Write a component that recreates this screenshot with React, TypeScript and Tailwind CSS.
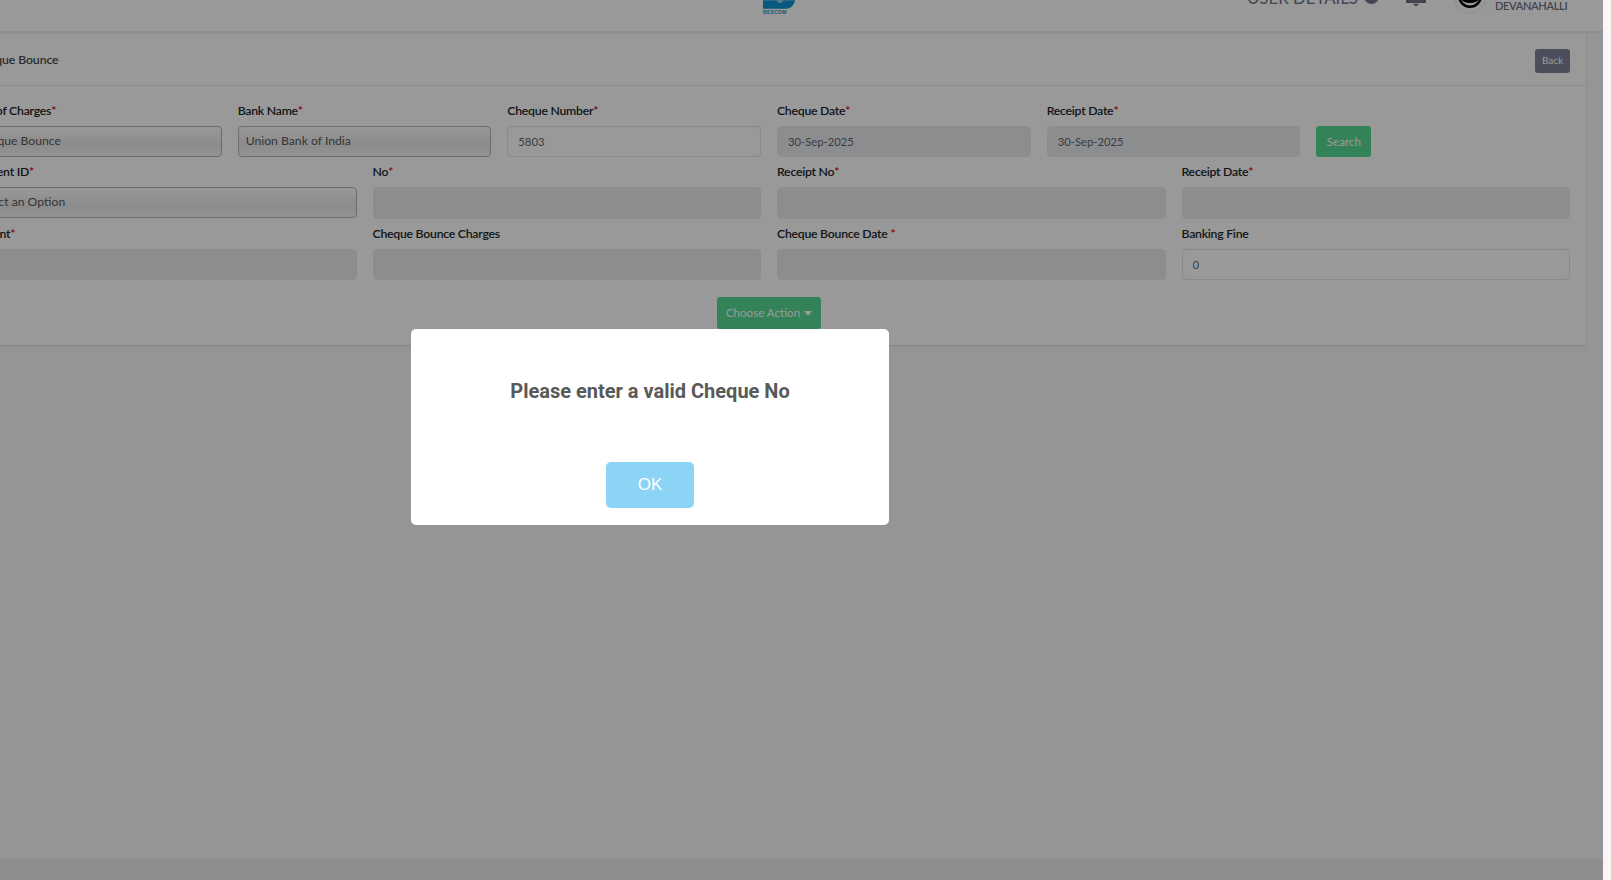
const labelCls = "h-[30px] pt-[1px] flex items-center font-['Lato',sans-serif] text-[12.25px] tracking-[-0.25px] font-semibold text-[#212529] whitespace-nowrap";
const inputCls = "w-full rounded-[4px] border px-[10px] font-['Lato',sans-serif] text-[11.25px] text-[#5f666d] outline-none";
const selectCls = "w-full h-[31px] rounded-[4px] border border-[#b4b4b4] pl-[7px] appearance-none bg-linear-to-b from-[#ffffff] via-[#e9e9e9] via-60% to-[#f6f6f6] font-['Lato',sans-serif] text-[12.2px] text-[#5a5a5a] outline-none";

function Label({ text, required = true }: { text: string; required?: boolean }) {
    return (
        <label className={labelCls}>
            {text}
            {required && <span className="text-[#e00000]">*</span>}
        </label>
    );
}

function TextField({ label, value = "", disabled = false, required = true, height = "h-[31px]" }: { label: string; value?: string; disabled?: boolean; required?: boolean; height?: string }) {
    return (
        <div className="px-2">
            <Label text={label} required={required} />
            <input
                readOnly
                defaultValue={value}
                className={`${inputCls} ${height} ${disabled ? "bg-[#e9ecef] border-[#e9ecef]" : "bg-white border-[#e4e4e4]"}`}
            />
        </div>
    );
}

function SelectField({ label, option }: { label: string; option: string }) {
    return (
        <div className="px-2">
            <Label text={label} />
            <select defaultValue={option} className={selectCls}>
                <option>{option}</option>
            </select>
        </div>
    );
}

function Header() {
    return (
        <header className="h-[31px] shrink-0 flex items-start overflow-hidden bg-white">
            {/* logo sits mostly above the fold */}
            <div className="ml-[763px] w-[32px] shrink-0 flex flex-col items-start">
                <svg width="32" height="9" viewBox="0 0 33 9" className="block">
                    <path d="M0 0H33C32 5 29 9 22 9H0Z" fill="#0f94d2" />
                    <path d="M14 0H21C20 2 18 3 16 3Z" fill="#9fd3ea" />
                </svg>
                <span className="mt-[1px] font-['Liberation_Sans',sans-serif] text-[5px] leading-[4px] font-bold tracking-[0.3px] text-[#0f94d2]">BESCOM</span>
            </div>
            <div className="ml-[452px] -mt-[11px] shrink-0 font-['Lato',sans-serif] text-[16.8px] leading-[18px] text-[#6f7284] whitespace-nowrap">USER DETAILS</div>
            <div className="ml-[6px] -mt-[11px] w-[15px] h-[15px] shrink-0 rounded-full bg-[#6f7284]" />
            <svg width="20" height="8" viewBox="0 0 20 8" className="ml-[27px] shrink-0 block">
                <path d="M0 0H20V3H0Z" fill="#6f7284" />
                <path d="M7 3.8Q10 8.5 13 3.8Z" fill="#6f7284" />
            </svg>
            <svg width="34" height="14" viewBox="0 0 34 14" className="ml-[27px] shrink-0 block">
                <circle cx="17" cy="-3" r="16" fill="#ffffff" stroke="#ececec" />
                <circle cx="17" cy="-4" r="10.8" fill="#ffffff" stroke="#000000" strokeWidth="2.5" />
                <ellipse cx="17" cy="-1" rx="8.5" ry="4" fill="#000000" />
            </svg>
            <div className="ml-[8px] -mt-[1px] shrink-0 font-['Lato',sans-serif] text-[11px] leading-[14px] tracking-[-0.3px] font-semibold text-[#6f7284] whitespace-nowrap">DEVANAHALLI</div>
        </header>
    );
}

function ChequeCard() {
    return (
        <section className="ml-[-48px] mr-[17px] mt-[1px] bg-white shadow-[0_1px_2px_rgba(0,0,0,0.12)]">
            <div className="h-[52px] pl-[22px] pr-[16px] flex items-center justify-between border-b border-[#e9e9e9]">
                <h2 className="pt-[2px] font-['Lato',sans-serif] text-[12.25px] tracking-[-0.1px] font-semibold text-[#4a4a4a]">Cheque Bounce</h2>
                <button className="mt-[2px] w-[35px] h-[24px] rounded-[3px] bg-[#818298] text-white font-['Lato',sans-serif] text-[10px]">Back</button>
            </div>
            <div className="px-2 pt-[10px] pb-[16px]">
                <div className="grid grid-cols-6">
                    <SelectField label="Type of Charges" option="Cheque Bounce" />
                    <SelectField label="Bank Name" option="Union Bank of India" />
                    <TextField label="Cheque Number" value="5803" />
                    <TextField label="Cheque Date" value="30-Sep-2025" disabled />
                    <TextField label="Receipt Date" value="30-Sep-2025" disabled />
                    <div className="px-2 pt-[30px]">
                        <button className="w-[55px] h-[31px] rounded-[3px] bg-[#55d993] text-white font-['Lato',sans-serif] text-[11.6px]">Search</button>
                    </div>
                </div>
                <div className="grid grid-cols-4">
                    <SelectField label="Payment ID" option="Select an Option" />
                    <TextField label="No" disabled height="h-[32px]" />
                    <TextField label="Receipt No" disabled height="h-[32px]" />
                    <TextField label="Receipt Date" disabled height="h-[32px]" />
                </div>
                <div className="grid grid-cols-4">
                    <TextField label="Amount" disabled />
                    <TextField label="Cheque Bounce Charges" disabled required={false} />
                    <div className="px-2">
                        <label className={labelCls}>
                            Cheque Bounce Date <span className="ml-[3px] text-[#e00000]">*</span>
                        </label>
                        <input readOnly className={`${inputCls} h-[31px] bg-[#e9ecef] border-[#e9ecef]`} />
                    </div>
                    <TextField label="Banking Fine" value="0" required={false} />
                </div>
                <div className="mt-[17px] flex justify-center">
                    <button className="w-[104px] h-[32px] rounded-[3px] bg-[#55d993] text-white font-['Lato',sans-serif] text-[11.55px] flex items-center justify-center gap-[4px]">
                        Choose Action
                        <span className="w-0 h-0 border-x-[4px] border-x-transparent border-t-[5px] border-t-white" />
                    </button>
                </div>
            </div>
        </section>
    );
}

export default function App() {
    return (
        <div className="relative w-[1611px] h-[880px] overflow-hidden bg-[#f7f7f7] flex">
            <div className="relative w-[1603px] h-full shrink-0 flex flex-col bg-[#f7f8fb] overflow-hidden">
                <Header />
                <div className="h-[2px] shrink-0 bg-[#ececec]" />
                <main className="flex-1">
                    <ChequeCard />
                </main>
                <footer className="h-[21px] shrink-0 bg-[#ededed]" />

                {/* alert overlay */}
                <div className="absolute inset-0 bg-black/40 pl-[411px] pt-[329px]">
                    <div className="w-[478px] h-[196px] rounded-[5px] bg-white flex flex-col items-center">
                        <h2 className="mt-[47px] h-[30px] flex items-center font-['Roboto',sans-serif] text-[20px] font-bold text-[#595959]">Please enter a valid Cheque No</h2>
                        <button className="mt-[56px] w-[88px] h-[46px] rounded-[5px] bg-[#8cd4f5] text-white font-['Liberation_Sans',sans-serif] text-[17px]">OK</button>
                    </div>
                </div>
            </div>
        </div>
    );
}
